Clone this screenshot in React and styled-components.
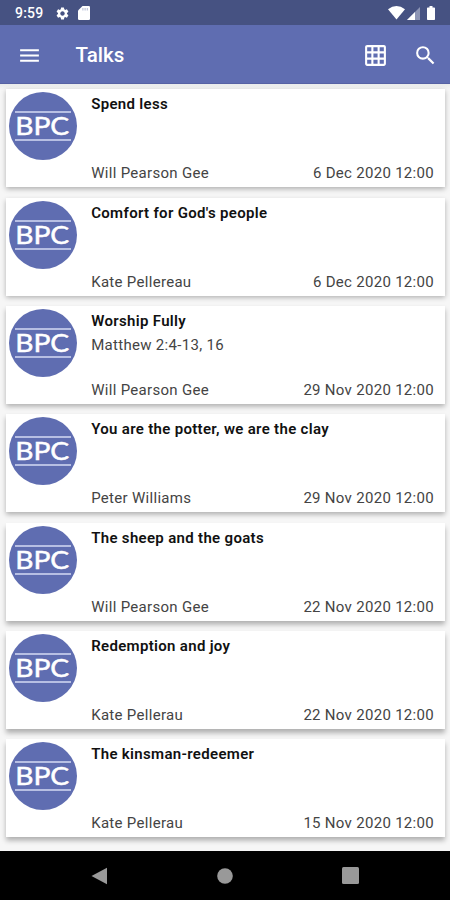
import React from "react";
import styled, { createGlobalStyle } from "styled-components";
import { MdGridOn, MdMenu, MdSearch, MdSettings } from "react-icons/md";

const GlobalStyle = createGlobalStyle`
  * {
    box-sizing: border-box;
  }

  body {
    margin: 0;
    font-family: Roboto, "Liberation Sans", sans-serif;
  }
`;

const Screen = styled.div`
  display: flex;
  flex-direction: column;
  width: 450px;
  height: 900px;
  overflow: hidden;
  background: #f6f6f6;
`;

const StatusBar = styled.header`
  display: flex;
  flex: none;
  align-items: center;
  justify-content: space-between;
  height: 25px;
  padding: 1px 15px 0 15px;
  background: #465282;
  color: #fff;
`;

const StatusGroup = styled.div`
  display: flex;
  align-items: center;
  gap: ${(props) => props.$gap}px;
`;

const Clock = styled.span`
  width: 29px;
  margin-right: 3px;
  font-size: 14px;
  font-weight: 500;
  letter-spacing: 0.2px;
  line-height: 16px;
  white-space: nowrap;
`;

const AppBar = styled.nav`
  display: flex;
  flex: none;
  align-items: center;
  height: 59px;
  padding: 2px 12px 0 17px;
  background: #5f6db1;
  border-bottom: 1px solid #5662a4;
  color: #fff;
`;

const Title = styled.h1`
  flex: 1;
  margin: 0 0 0 33.5px;
  font-size: 20.5px;
  font-weight: 500;
  line-height: 24px;
`;

const Actions = styled.div`
  display: flex;
  align-items: center;
  gap: 25px;
`;

const List = styled.main`
  display: flex;
  flex: 1;
  flex-direction: column;
  gap: 10.35px;
  min-height: 0;
  padding: 5.3px 5px 0 6px;
  overflow: hidden;
  background: linear-gradient(#e9ebeb, #f6f6f6 6px);
`;

const Card = styled.article`
  display: flex;
  flex: none;
  height: 98px;
  padding: 3px 11px 4.9px 3px;
  background: #fff;
  box-shadow: 0 ${(props) => props.$depth}px 5px rgba(0, 0, 0, 0.29);
`;

const Body = styled.div`
  display: flex;
  flex: 1;
  flex-direction: column;
  margin-left: 14.2px;
  padding-top: 3px;
  color: #444;
  font-size: 15px;
  line-height: 18px;
`;

const TalkTitle = styled.h2`
  margin: 0 0 6px;
  color: #111;
  font-size: 15px;
  font-weight: 600;
  letter-spacing: 0.32px;
  line-height: 18px;
`;

const Passage = styled.span`
  letter-spacing: 0.3px;
`;

const Footer = styled.div`
  display: flex;
  justify-content: space-between;
  margin-top: auto;
  letter-spacing: 0.3px;
`;

const LogoBox = styled.svg`
  flex: none;
  width: 68px;
  height: 68px;
`;

const NavBar = styled.footer`
  display: flex;
  flex: none;
  align-items: center;
  justify-content: space-between;
  height: 49px;
  padding: 0 91px;
  background: #000;
`;

const talks = [
  { title: "Spend less", speaker: "Will Pearson Gee", date: "6 Dec 2020 12:00" },
  { title: "Comfort for God's people", speaker: "Kate Pellereau", date: "6 Dec 2020 12:00" },
  { title: "Worship Fully", passage: "Matthew 2:4-13, 16", speaker: "Will Pearson Gee", date: "29 Nov 2020 12:00" },
  { title: "You are the potter, we are the clay", speaker: "Peter Williams", date: "29 Nov 2020 12:00" },
  { title: "The sheep and the goats", speaker: "Will Pearson Gee", date: "22 Nov 2020 12:00" },
  { title: "Redemption and joy", speaker: "Kate Pellerau", date: "22 Nov 2020 12:00" },
  { title: "The kinsman-redeemer", speaker: "Kate Pellerau", date: "15 Nov 2020 12:00" },
];

const Logo = () => (
  <LogoBox viewBox="0 0 68 68">
    <circle cx="34" cy="34" r="34" fill="#5f6db1" />
    <path d="M6 20H62M6 48H62" stroke="#d5daf3" strokeWidth="1.3" />
    <text
      x="6.2"
      y="43"
      fill="#fff"
      stroke="#fff"
      strokeWidth="0.5"
      fontFamily="Lato, sans-serif"
      fontSize="25.5"
      textLength="54"
      lengthAdjust="spacingAndGlyphs"
    >
      BPC
    </text>
  </LogoBox>
);

const SdCard = () => (
  <svg width="12" height="14" viewBox="0 0 12 14">
    <path d="M4.5 0H10.7Q12 0 12 1.3V12.7Q12 14 10.7 14H1.3Q0 14 0 12.7V4.5Z" fill="#fff" />
    <path d="M4.9 2V4.5M7.1 2V4.5M9.3 2V4.5" stroke="#b9bfd6" strokeWidth="1.1" />
  </svg>
);

const Wifi = () => (
  <svg width="17" height="14" viewBox="0 0 17 14">
    <path d="M0 3.2Q8.5 -3 17 3.2L8.5 13.5Z" fill="#fff" />
  </svg>
);

const Signal = () => (
  <svg width="13" height="13" viewBox="0 0 13 13">
    <path d="M13 0V13H0Z" fill="#8d95b5" />
    <path d="M8 5V13H0Z" fill="#fff" />
  </svg>
);

const Battery = () => (
  <svg width="8" height="14" viewBox="0 0 8 14">
    <path d="M2.5 0H5.5V1.5H7.2Q8 1.5 8 2.3V13.2Q8 14 7.2 14H.8Q0 14 0 13.2V2.3Q0 1.5 .8 1.5H2.5Z" fill="#fff" />
  </svg>
);

const App = () => {
  return (
    <>
      <GlobalStyle />
      <Screen>
        <StatusBar>
          <StatusGroup $gap={8}>
            <Clock>9:59</Clock>
            <MdSettings size={15} />
            <SdCard />
          </StatusGroup>
          <StatusGroup $gap={7}>
            <StatusGroup $gap={2}>
              <Wifi />
              <Signal />
            </StatusGroup>
            <Battery />
          </StatusGroup>
        </StatusBar>
        <AppBar>
          <MdMenu size={25} />
          <Title>Talks</Title>
          <Actions>
            <MdGridOn size={25} />
            <MdSearch size={25} />
          </Actions>
        </AppBar>
        <List>
          {talks.map((talk, index) => (
            <Card key={talk.title} $depth={2 + index * 0.4}>
              <Logo />
              <Body>
                <TalkTitle>{talk.title}</TalkTitle>
                {talk.passage && <Passage>{talk.passage}</Passage>}
                <Footer>
                  <span>{talk.speaker}</span>
                  <span>{talk.date}</span>
                </Footer>
              </Body>
            </Card>
          ))}
        </List>
        <NavBar>
          <svg width="17" height="18" viewBox="0 0 17 18">
            <path d="M.5 9L16 .8V17.2Z" fill="#999" />
          </svg>
          <svg width="16" height="16" viewBox="0 0 16 16">
            <circle cx="8" cy="8" r="7.8" fill="#999" />
          </svg>
          <svg width="17" height="17" viewBox="0 0 17 17">
            <rect width="17" height="17" rx="1.5" fill="#999" />
          </svg>
        </NavBar>
      </Screen>
    </>
  );
};

export default App;
